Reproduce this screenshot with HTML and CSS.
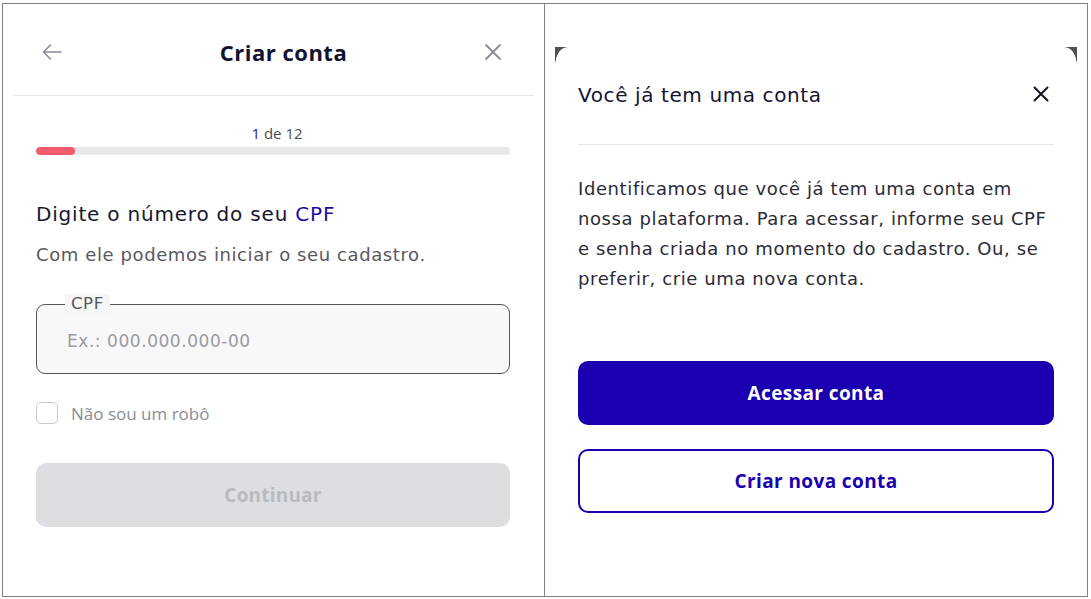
FILE: index.html
```html
<!DOCTYPE html>
<html lang="pt-BR">
<head>
<meta charset="utf-8">
<title>Criar conta</title>
<link rel="stylesheet" href="styles.css">
</head>
<body>
<div class="frame">
  <section class="panel left">
    <header class="topbar">
      <span class="icon-btn back">
        <svg width="24" height="24" viewBox="0 0 24 24" fill="none" stroke="#8a8b99" stroke-width="1.6" stroke-linecap="round" stroke-linejoin="round"><path d="M21 12H3.5M10.5 5l-7 7 7 7"/></svg>
      </span>
      <h1 class="title">Criar conta</h1>
      <span class="icon-btn close">
        <svg width="24" height="24" viewBox="0 0 24 24" fill="none" stroke="#8a8b99" stroke-width="1.8" stroke-linecap="round"><path d="M5 5l14 14M19 5L5 19"/></svg>
      </span>
    </header>
    <div class="content">
      <div class="step"><span class="step-now">1</span> de 12</div>
      <div class="bar"><div class="bar-fill" style="width:8.3%"></div></div>
      <h2 class="heading">Digite o número do seu <span class="accent">CPF</span></h2>
      <p class="sub">Com ele podemos iniciar o seu cadastro.</p>
      <fieldset class="field">
        <legend class="field-label">CPF</legend>
        <span class="placeholder">Ex.: 000.000.000-00</span>
      </fieldset>
      <label class="check-row">
        <span class="checkbox"></span>
        <span class="check-label">Não sou um robô</span>
      </label>
      <button class="btn btn-disabled">Continuar</button>
    </div>
  </section>
  <section class="panel right">
    <div class="sheet-corners">
      <span class="corner corner-l"></span>
      <span class="corner corner-r"></span>
    </div>
    <div class="modal">
      <div class="modal-head">
        <h2 class="modal-title">Você já tem uma conta</h2>
        <span class="icon-btn">
          <svg width="24" height="24" viewBox="0 0 24 24" fill="none" stroke="#141420" stroke-width="2" stroke-linecap="round"><path d="M5.5 5.5l13 13M18.5 5.5l-13 13"/></svg>
        </span>
      </div>
      <div class="modal-divider"></div>
      <p class="modal-text">Identificamos que você já tem uma conta em nossa plataforma. Para acessar, informe seu CPF e senha criada no momento do cadastro. Ou, se preferir, crie uma nova conta.</p>
      <button class="btn btn-primary">Acessar conta</button>
      <button class="btn btn-outline">Criar nova conta</button>
    </div>
  </section>
</div>
</body>
</html>
```
FILE: styles.css
```css
* { box-sizing: border-box; }
html, body { margin: 0; padding: 0; background: #fff; }
body { font-family: "DejaVu Sans", "Open Sans", sans-serif; color: #14142b; }

.frame {
  margin: 3px 0 0 2px;
  width: 1086px;
  height: 594px;
  border: 1px solid #808080;
  display: grid;
  grid-template-columns: 542px 1fr;
}
.panel { min-width: 0; }
.left { border-right: 1px solid #808080; }

.topbar {
  margin: 0 10px;
  height: 92px;
  padding: 5px 29px 0 27px;
  border-bottom: 1px solid #e6e6e9;
  display: flex;
  align-items: center;
  justify-content: space-between;
}
.icon-btn { display: flex; width: 24px; height: 24px; }
.title { margin: 0 0 0 22px; font-family: "Open Sans", sans-serif; font-size: 22px; font-weight: 700; letter-spacing: 0.5px; color: #12122e; }

.content { padding: 0 34px 0 33px; }
.step { margin-top: 27px; padding-left: 8px; height: 20px; line-height: 20px; text-align: center; font-family: "Open Sans", sans-serif; font-size: 15px; color: #4a4a55; }
.step-now { color: #2b1890; }
.bar { margin-top: 4px; height: 8px; border-radius: 4px; background: #e8e8ea; overflow: hidden; }
.bar-fill { height: 100%; background: #f25c6b; border-radius: 4px; }

.heading { margin: 46px 0 0; font-size: 20px; letter-spacing: 0.8px; line-height: 26px; font-weight: 400; color: #16162e; }
.accent { color: #1f0aa6; }
.sub { margin: 16px 0 0; font-size: 18px; letter-spacing: 0.6px; line-height: 24px; color: #595962; }

.field {
  margin: 27px 0 0;
  padding: 0 0 0 30px;
  height: 80px;
  border: 1px solid #55555e;
  border-radius: 9px;
  background: #f8f8fa;
  display: flex;
  align-items: center;
}
.field-label {
  margin-left: -2px;
  padding: 0 6px;
  font-size: 16.5px;
  letter-spacing: 0.6px;
  line-height: 20px;
  color: #55555e;
  background: #f6f6f6;
}
.placeholder { font-size: 17px; letter-spacing: 0.55px; color: #9a9aa3; margin-top: -5px; }

.check-row { margin-top: 28px; display: flex; align-items: center; gap: 13px; height: 22px; }
.checkbox { width: 22px; height: 22px; border: 1px solid #c8c8cf; border-radius: 5px; background: #fff; }
.check-label { font-family: "Open Sans", sans-serif; font-size: 17px; color: #8c8c96; }

.btn {
  display: block;
  width: 100%;
  height: 64px;
  border-radius: 10px;
  font-family: "Open Sans", sans-serif;
  font-size: 19px;
  font-weight: 700;
  letter-spacing: 0.4px;
  border: none;
  padding: 0;
}
.btn-disabled { margin-top: 39px; background: #dcdee2; color: #b8babf; letter-spacing: 0.2px; }

.sheet-corners {
  margin: 43px 10px 0;
  height: 18px;
  display: flex;
  justify-content: space-between;
}
.corner { width: 12px; height: 18px; }
.corner-l { background: radial-gradient(12px 18px at 100% 100%, #fff 96%, #505050 100%); }
.corner-r { background: radial-gradient(12px 18px at 0% 100%, #fff 96%, #505050 100%); }

.modal { padding: 0 33px; }
.modal-head {
  margin-top: 17px;
  height: 26px;
  display: flex;
  align-items: center;
  justify-content: space-between;
}
.modal-head .icon-btn { margin-right: 1px; margin-top: -3px; }
.modal-title { margin: 0; font-size: 20px; letter-spacing: 0.6px; font-weight: 400; color: #141433; }
.modal-divider { margin-top: 36px; height: 1px; background: #e6e6ea; }
.modal-text { margin: 29px 0 0; font-size: 18px; letter-spacing: 0.6px; line-height: 30px; color: #2b2b38; }
.btn-primary { margin-top: 67px; background: #1a00b0; color: #fff; }
.btn-outline { margin-top: 24px; background: #fff; color: #1a00b0; border: 2.5px solid #1a00b0; }
```
